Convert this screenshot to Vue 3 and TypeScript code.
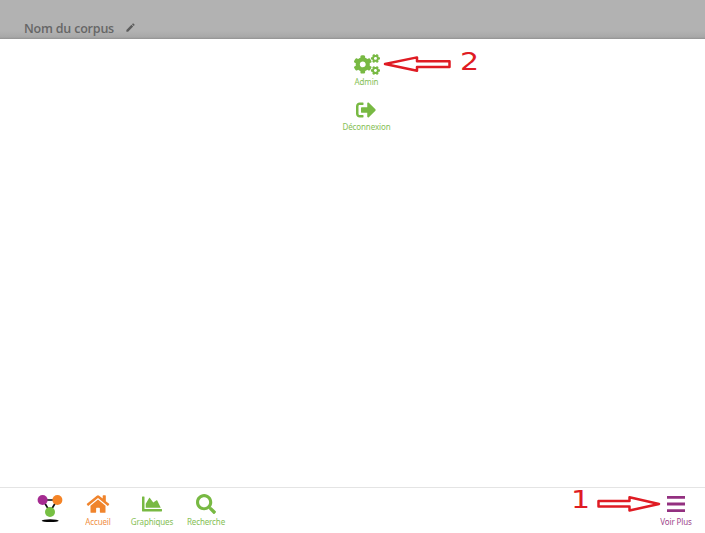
<script setup lang="ts">
interface Entry {
  id: string
  label: string
  viewBox: string
  paths: string[]
}

const smallCog =
  'M512.1 191l-8.2 14.3c-3 5.3-9.4 7.5-15.1 5.4-11.8-4.4-22.6-10.7-32.1-18.6-4.6-3.8-5.8-10.5-2.8-15.7l8.2-14.3c-6.9-8-12.3-17.3-15.9-27.4h-16.5c-6 0-11.2-4.3-12.2-10.3-2-12-2.1-24.6 0-37.1 1-6 6.2-10.4 12.2-10.4h16.5c3.6-10.1 9-19.4 15.9-27.4l-8.2-14.3c-3-5.2-1.9-11.9 2.8-15.7 9.5-7.9 20.4-14.2 32.1-18.6 5.7-2.1 12.1.1 15.1 5.4l8.2 14.3c10.5-1.9 21.2-1.9 31.7 0L552 6.3c3-5.3 9.4-7.5 15.1-5.4 11.8 4.4 22.6 10.7 32.1 18.6 4.6 3.8 5.8 10.5 2.8 15.7l-8.2 14.3c6.9 8 12.3 17.3 15.9 27.4h16.5c6 0 11.2 4.3 12.2 10.3 2 12 2.1 24.6 0 37.1-1 6-6.2 10.4-12.2 10.4h-16.5c-3.6 10.1-9 19.4-15.9 27.4l8.2 14.3c3 5.2 1.9 11.9-2.8 15.7-9.5 7.9-20.4 14.2-32.1 18.6-5.7 2.1-12.1-.1-15.1-5.4l-8.2-14.3c-10.4 1.9-21.2 1.9-31.7 0zm-10.5-58.8c38.5 29.6 82.4-14.3 52.8-52.8-38.5-29.7-82.4 14.3-52.8 52.8z'
const largeCog =
  'M386.3 286.1l33.7 16.8c10.1 5.8 14.5 18.1 10.5 29.1-8.9 24.2-26.4 46.4-42.6 65.8-7.4 8.9-20.2 11.1-30.3 5.3l-29.1-16.8c-16 13.7-34.6 24.6-54.9 31.7v33.6c0 11.6-8.3 21.6-19.7 23.6-24.6 4.2-50.4 4.4-75.9 0-11.5-2-20-11.9-20-23.6V418c-20.3-7.2-38.9-18-54.9-31.7L74 403c-10 5.8-22.9 3.6-30.3-5.3-16.2-19.4-33.3-41.6-42.2-65.7-4-10.9.4-23.2 10.5-29.1l33.3-16.8c-3.9-20.9-3.9-42.4 0-63.4L12 205.8c-10.1-5.8-14.6-18.1-10.5-29 8.9-24.2 26-46.4 42.2-65.8 7.4-8.9 20.2-11.1 30.3-5.3l29.1 16.8c16-13.7 34.6-24.6 54.9-31.7V57.1c0-11.5 8.2-21.5 19.6-23.5 24.6-4.2 50.5-4.4 76-.1 11.5 2 20 11.9 20 23.6v33.6c20.3 7.2 38.9 18 54.9 31.7l29.1-16.8c10-5.8 22.9-3.6 30.3 5.3 16.2 19.4 33.2 41.6 42.1 65.8 4 10.9.1 23.2-10 29.1l-33.7 16.8c3.9 21 3.9 42.5 0 63.5zm-117.6 21.1c59.2-77-28.7-164.9-105.7-105.7-59.2 77 28.7 164.9 105.7 105.7z'

const navEntries: Entry[] = [
  {
    id: 'home',
    label: 'Accueil',
    viewBox: '0 0 576 512',
    paths: [
      'M280.37 148.26L96 300.11V464a16 16 0 0 0 16 16l112.06-.29a16 16 0 0 0 15.92-16V368a16 16 0 0 1 16-16h64a16 16 0 0 1 16 16v95.64a16 16 0 0 0 16 16.05L464 480a16 16 0 0 0 16-16V300L295.67 148.26a12.19 12.19 0 0 0-15.3 0z',
      'M571.6 251.47L488 182.56V44.05a12 12 0 0 0-12-12h-56a12 12 0 0 0-12 12v72.61L318.47 43a48 48 0 0 0-61 0L4.34 251.47a12 12 0 0 0-1.6 16.9l25.5 31A12 12 0 0 0 45.15 301l235.22-193.74a12.19 12.19 0 0 1 15.3 0L530.9 301a12 12 0 0 0 16.9-1.6l25.5-31a12 12 0 0 0-1.7-16.93z',
    ],
  },
  {
    id: 'charts',
    label: 'Graphiques',
    viewBox: '0 0 512 512',
    paths: [
      'M500 384c6.6 0 12 5.4 12 12v40c0 6.6-5.4 12-12 12H12c-6.6 0-12-5.4-12-12V76c0-6.6 5.4-12 12-12h40c6.6 0 12 5.4 12 12v308h436z',
      'M372.7 159.5L288 216l-85.3-113.7c-5.1-6.8-15.5-6.3-19.9 1L96 248v104h384l-89.9-187.8c-3.2-6.5-11.4-8.7-17.4-4.7z',
    ],
  },
  {
    id: 'search',
    label: 'Recherche',
    viewBox: '0 0 512 512',
    paths: [
      'M505 442.7L405.3 343c-4.5-4.5-10.6-7-17-7H372c27.6-35.3 44-79.7 44-128C416 93.1 322.9 0 208 0S0 93.1 0 208s93.1 208 208 208c48.3 0 92.7-16.4 128-44v16.3c0 6.4 2.5 12.5 7 17l99.7 99.7c9.4 9.4 24.6 9.4 33.9 0l28.3-28.3c9.4-9.4 9.4-24.6.1-34zM208 336c-70.7 0-128-57.2-128-128 0-70.7 57.2-128 128-128 70.7 0 128 57.2 128 128 0 70.7-57.2 128-128 128z',
    ],
  },
]
</script>

<template>
  <div class="screen">
    <header class="topbar">
      <span class="title">Nom du corpus</span>
      <svg class="pencil" viewBox="0 0 24 24">
        <path d="M3 17.25V21h3.75L17.81 9.94l-3.75-3.75L3 17.25zM20.71 7.04a1 1 0 0 0 0-1.41l-2.34-2.34a1 1 0 0 0-1.41 0l-1.83 1.83 3.75 3.75 1.83-1.83z" />
      </svg>
    </header>

    <main class="panel">
      <a class="entry admin">
        <svg class="icon cogs" viewBox="0 0 640 512">
          <path :d="largeCog" />
          <path :d="smallCog" />
          <path :d="smallCog" transform="translate(0 299)" />
        </svg>
        <span class="label">Admin</span>
      </a>
      <a class="entry logout">
        <svg class="icon exit" viewBox="0 0 512 512">
          <path d="M497 273L329 441c-15 15-41 4.5-41-17v-96H152c-13.3 0-24-10.7-24-24v-96c0-13.3 10.7-24 24-24h136V88c0-21.4 25.9-32 41-17l168 168c9.3 9.4 9.3 24.6 0 34zM192 436v-40c0-6.6-5.4-12-12-12H96c-17.7 0-32-14.3-32-32V160c0-17.7 14.3-32 32-32h84c6.6 0 12-5.4 12-12V76c0-6.6-5.4-12-12-12H96c-53 0-96 43-96 96v192c0 53 43 96 96 96h84c6.6 0 12-5.4 12-12z" />
        </svg>
        <span class="label">Déconnexion</span>
      </a>
    </main>

    <nav class="navbar">
      <svg class="logo" viewBox="0 0 26 30">
        <path d="M6 6H20L13 18Z" fill="none" stroke="#111" stroke-width="1.700" />
        <circle cx="5.600" cy="6" r="5" fill="#a52b91" />
        <circle cx="20.400" cy="6" r="5" fill="#f58426" />
        <circle cx="13" cy="18" r="5" fill="#77c043" />
        <ellipse cx="13.200" cy="26.700" rx="8.500" ry="1.400" fill="#050505" />
      </svg>
      <a v-for="entry in navEntries" :key="entry.id" class="entry" :class="entry.id">
        <svg class="icon" :viewBox="entry.viewBox">
          <path v-for="d in entry.paths" :key="d" :d="d" />
        </svg>
        <span class="label">{{ entry.label }}</span>
      </a>
      <a class="entry more">
        <svg class="icon" viewBox="0 0 18 20">
          <path d="M0 2h18v2.800H0zM0 8.600h18v2.800H0zM0 15.200h18v2.800H0z" />
        </svg>
        <span class="label">Voir Plus</span>
      </a>
    </nav>

    <div class="callout callout-two">
      <svg class="arrow" viewBox="0 0 68 18">
        <path d="M2 9L34 2.400V6.300H66.500V12H34V15.800Z" />
      </svg>
      <span class="number">2</span>
    </div>
    <div class="callout callout-one">
      <span class="number">1</span>
      <svg class="arrow" viewBox="0 0 64 18">
        <path d="M1.500 6.100H32.500V2.200L62 9L32.500 15.500V11.600H1.500Z" />
      </svg>
    </div>
  </div>
</template>

<style>
body {
  margin: 0;
  overflow: hidden;
}
</style>

<style scoped>
.screen {
  position: relative;
  display: flex;
  flex-direction: column;
  width: 705px;
  height: 533px;
  background: #fff;
  font-family: 'Noto Sans', 'Open Sans', sans-serif;
}

.topbar {
  display: flex;
  box-sizing: border-box;
  height: 39px;
  padding: 20px 0 0 24px;
  background: linear-gradient(#b2b2b2 0, #b2b2b2 31px, #a8a8a8 37px, #929292 39px);
  color: #666;
}

.title {
  width: 90px;
  font: 600 12.5px/17px 'Open Sans', sans-serif;
  letter-spacing: -0.2px;
  white-space: nowrap;
}

.pencil {
  width: 11px;
  height: 11px;
  margin: 2px 0 0 11px;
  fill: #5c5c5c;
}

.panel {
  display: flex;
  flex: 1;
  flex-direction: column;
  align-items: center;
  padding: 15px 0 0 28px;
}

.entry {
  display: flex;
  flex-direction: column;
  align-items: center;
  color: #78b943;
}

.icon {
  display: block;
  width: 20px;
  height: 20px;
  fill: currentColor;
}

.label {
  margin-top: 1px;
  font-size: 8px;
  font-weight: 400;
  line-height: 12px;
  letter-spacing: -0.13px;
  white-space: nowrap;
  opacity: 0.9;
}

.cogs {
  width: 26px;
  height: 21px;
}

.admin {
  height: 46px;
}

.navbar {
  display: flex;
  box-sizing: border-box;
  height: 46px;
  padding: 6px 12px 0 37px;
  border-top: 1px solid #e4e4e4;
}

.logo {
  width: 26px;
  height: 30px;
}

.navbar .label {
  margin-top: 2px;
  line-height: 11px;
}

.home {
  width: 54px;
  margin-left: 8px;
  color: #f0842c;
}

.home .icon {
  width: 24px;
}

.charts,
.search {
  width: 54px;
}

.more {
  width: 34px;
  margin-left: auto;
  color: #933080;
}

.more .icon {
  width: 18px;
}

.callout {
  position: absolute;
  display: flex;
  align-items: center;
  color: #df1b23;
}

.callout-two {
  top: 50px;
  left: 383px;
}

.callout-one {
  top: 486px;
  left: 571px;
}

.number {
  display: block;
  width: 18px;
  font: 24px/28px 'DejaVu Sans', sans-serif;
  transform: scaleX(1.25);
  transform-origin: left;
}

.arrow {
  width: 68px;
  height: 18px;
  fill: #fff;
  stroke: currentColor;
  stroke-width: 2.5;
  stroke-linejoin: round;
}

.callout-two .number {
  margin: -2px 0 0 9px;
}

.callout-two .arrow {
  margin-top: 2px;
}

.callout-one .arrow {
  width: 64px;
  margin: 7px 0 0 8px;
}
</style>
